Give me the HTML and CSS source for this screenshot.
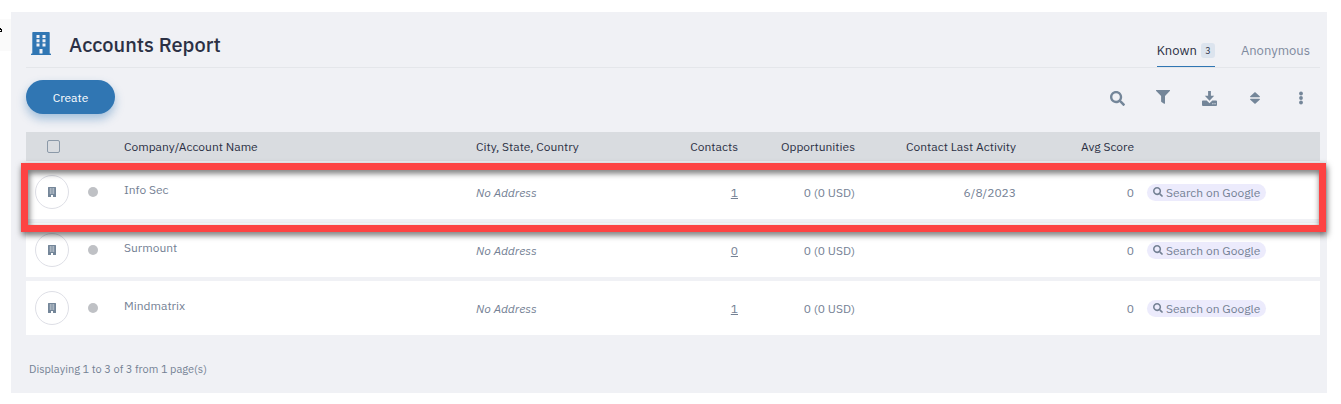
FILE: index.html
```html
<!DOCTYPE html>
<html lang="en">

<head>
    <meta charset="UTF-8">
    <meta name="viewport" content="width=device-width, initial-scale=1.0">
    <title>Accounts Report</title>
    <link rel="stylesheet" href="styles.css">
</head>

<body>
    <!-- shared icons -->
    <svg class="sprite" aria-hidden="true">
        <symbol id="icon-search" viewBox="0 0 512 512">
            <path d="M505 442.700L405.300 343c-4.500-4.500-10.600-7-17-7H372c27.600-35.300 44-79.700 44-128C416 93.100 322.900 0 208 0S0 93.100 0 208s93.100 208 208 208c48.300 0 92.700-16.400 128-44v16.300c0 6.400 2.500 12.500 7 17l99.700 99.700c9.400 9.400 24.600 9.400 33.900 0l28.300-28.300c9.400-9.400 9.400-24.600.1-34zM208 336c-70.700 0-128-57.200-128-128 0-70.700 57.200-128 128-128 70.700 0 128 57.200 128 128 0 70.700-57.200 128-128 128z" />
        </symbol>
        <symbol id="icon-building" viewBox="0 0 8 10">
            <path fill-rule="evenodd" d="M.5 0h7q.5 0 .5.500V10H5V8H3v2H0V.5Q0 0 .5 0zM1.800 1.500v1h1v-1zM3.500 1.500v1h1v-1zM5.200 1.500v1h1v-1zM1.800 3.500v1h1v-1zM3.500 3.500v1h1v-1zM5.200 3.500v1h1v-1zM1.800 5.500v1h1v-1zM3.500 5.500v1h1v-1zM5.200 5.500v1h1v-1z" />
        </symbol>
    </svg>

    <div class="layout">
        <aside class="rail">
            <div class="rail-tab">
                <svg width="3" height="6" viewBox="0 0 3 6"><path d="M0 0h1v1h1v3H0V3h1V2H0z" /></svg>
            </div>
        </aside>

        <main class="panel">
            <header class="panel-header">
                <svg class="title-icon" viewBox="0 0 20 23">
                    <path fill-rule="evenodd" d="M2 0h16q.7 0 .7.700V21.500h.6q.7 0 .7.700V23H0v-.8q0-.7.700-.7h.6V.7Q1.300 0 2 0zM5.500 3v3h3V3zM11.500 3v3h3V3zM5.500 7.200v3h3v-3zM11.500 7.200v3h3v-3zM5.500 11.400v3h3v-3zM11.500 11.400v3h3v-3zM8.500 17v4.500h3V17z" />
                </svg>
                <h1>Accounts Report</h1>
                <nav class="tabs">
                    <a href="#" class="tab active">Known <span class="count">3</span></a>
                    <a href="#" class="tab">Anonymous</a>
                </nav>
            </header>

            <div class="toolbar">
                <button class="btn-create">Create</button>
                <div class="tools">
                    <button class="tool" aria-label="Search"><svg width="15" height="15"><use href="#icon-search" /></svg></button>
                    <button class="tool tool-filter" aria-label="Filter"><svg width="14" height="14" viewBox="0 0 14 14"><path d="M.5 0h13c.5 0 .7.600.3 1L9 6v7.200c0 .5-.5.800-.9.500L5.500 12a.8.800 0 0 1-.4-.6V6L.2 1C-.2.600 0 0 .5 0z" /></svg></button>
                    <button class="tool" aria-label="Download"><svg width="15" height="15" viewBox="0 0 16 16"><path fill-rule="evenodd" d="M6.500 0h3v5H13L8 10.500 3 5h3.500zM1 10h4l3 3 3-3h4c.6 0 1 .4 1 1v4c0 .6-.4 1-1 1H1c-.6 0-1-.4-1-1v-4c0-.6.4-1 1-1zM11 13v1.200h1.200V13zM13.300 13v1.200h1.200V13z" /></svg></button>
                    <button class="tool" aria-label="Sort"><svg width="10" height="14" viewBox="0 0 10 14"><path d="M5 1L.3 5.300c-.5.500-.2 1 .3 1h8.800c.5 0 .8-.5.300-1zM5 13L.3 8.700c-.5-.5-.2-1 .3-1h8.800c.5 0 .8.500.3 1z" /></svg></button>
                    <button class="tool" aria-label="More"><svg width="4" height="14" viewBox="0 0 4 14"><circle cx="2" cy="2.500" r="1.900" /><circle cx="2" cy="7" r="1.900" /><circle cx="2" cy="11.500" r="1.900" /></svg></button>
                </div>
            </div>

            <table class="accounts">
                <thead>
                    <tr>
                        <th class="col-check"><input type="checkbox" aria-label="Select all"></th>
                        <th class="col-status"></th>
                        <th class="col-name">Company/Account Name</th>
                        <th class="col-city">City, State, Country</th>
                        <th class="col-contacts num">Contacts</th>
                        <th class="col-opps num">Opportunities</th>
                        <th class="col-activity num">Contact Last Activity</th>
                        <th class="col-score num">Avg Score</th>
                        <th></th>
                    </tr>
                </thead>
                <tbody>
                    <tr class="highlight">
                        <td><span class="avatar"><svg width="8" height="10"><use href="#icon-building" /></svg></span></td>
                        <td><span class="dot"></span></td>
                        <td class="name">Info Sec</td>
                        <td class="address">No Address</td>
                        <td class="num"><a href="#">1</a></td>
                        <td class="num">0 (0 USD)</td>
                        <td class="num">6/8/2023</td>
                        <td class="num">0</td>
                        <td class="action"><button class="btn-google"><svg width="10" height="10"><use href="#icon-search" /></svg>Search on Google</button></td>
                    </tr>
                    <tr>
                        <td><span class="avatar"><svg width="8" height="10"><use href="#icon-building" /></svg></span></td>
                        <td><span class="dot"></span></td>
                        <td class="name">Surmount</td>
                        <td class="address">No Address</td>
                        <td class="num"><a href="#">0</a></td>
                        <td class="num">0 (0 USD)</td>
                        <td class="num"></td>
                        <td class="num">0</td>
                        <td class="action"><button class="btn-google"><svg width="10" height="10"><use href="#icon-search" /></svg>Search on Google</button></td>
                    </tr>
                    <tr>
                        <td><span class="avatar"><svg width="8" height="10"><use href="#icon-building" /></svg></span></td>
                        <td><span class="dot"></span></td>
                        <td class="name">Mindmatrix</td>
                        <td class="address">No Address</td>
                        <td class="num"><a href="#">1</a></td>
                        <td class="num">0 (0 USD)</td>
                        <td class="num"></td>
                        <td class="num">0</td>
                        <td class="action"><button class="btn-google"><svg width="10" height="10"><use href="#icon-search" /></svg>Search on Google</button></td>
                    </tr>
                </tbody>
            </table>

            <p class="paging">Displaying 1 to 3 of 3 from 1 page(s)</p>
        </main>
    </div>
</body>

</html>
```
FILE: styles.css
```css
* {
    box-sizing: border-box;
}

body {
    margin: 0;
    background-color: #fff;
    font-family: "IBM Plex Sans", "Noto Sans", sans-serif;
    font-size: 12px;
    color: #748194;
}

button {
    font-family: inherit;
    border: none;
    cursor: pointer;
}

svg {
    display: block;
    fill: currentColor;
}

.sprite {
    display: none;
}

.layout {
    display: flex;
    padding: 12px 14px 11px 0;
}

.rail {
    width: 11px;
    padding-top: 7px;
}

.rail-tab {
    height: 32px;
    padding-top: 9px;
    background-color: #fafafa;
    color: #000;
}

.panel {
    flex: 1;
    padding: 0 7px 16px 15px;
    background-color: #f0f1f5;
}

.panel-header {
    display: flex;
    align-items: center;
    height: 56px;
    padding: 0 10px 0 5px;
    border-bottom: 1px solid #e4e6ea;
}

.title-icon {
    width: 20px;
    height: 23px;
    margin-top: 8px;
    color: #3076b3;
}

.panel-header h1 {
    margin: 10px 0 0 18px;
    font-size: 20px;
    font-weight: 500;
    line-height: 28px;
    color: #2b3044;
}

.tabs {
    display: flex;
    gap: 26px;
    align-self: flex-end;
    margin-left: auto;
}

.tab {
    height: 29px;
    font-size: 13px;
    line-height: 26px;
    color: #7f8a9e;
    text-decoration: none;
}

.tab.active {
    color: #2b3044;
    border-bottom: 1px solid #3076b3;
}

.count {
    display: inline-block;
    width: 14px;
    margin-left: 1px;
    border-radius: 3px;
    background-color: #dce4ee;
    font-size: 9px;
    line-height: 15px;
    text-align: center;
    vertical-align: 1px;
}

.toolbar {
    display: flex;
    justify-content: space-between;
    align-items: center;
    padding: 12px 11px 14px 0;
}

.btn-create {
    width: 89px;
    height: 34px;
    border-radius: 17px;
    background-color: #3076b3;
    box-shadow: 0 5px 10px rgba(48, 118, 179, 0.4);
    color: #fff;
    font-size: 12px;
}

.tools {
    display: flex;
    gap: 30px;
    margin-top: 2px;
}

.tool {
    display: flex;
    justify-content: center;
    align-items: center;
    width: 16px;
    height: 16px;
    padding: 0;
    background: none;
    color: #748699;
}

.tool-filter {
    align-items: flex-start;
}

.accounts {
    width: 100%;
    table-layout: fixed;
    border-spacing: 0 4px;
    margin: 0;
}

.accounts th,
.accounts td {
    padding: 0;
    text-align: left;
}

.accounts th {
    height: 29px;
    background-color: #d9dce0;
    color: #2b3044;
    font-weight: 400;
}

.accounts td {
    height: 54px;
    background-color: #fff;
}

.accounts .num {
    text-align: right;
}

.col-check {
    width: 62px;
}

.col-status {
    width: 36px;
}

.col-name {
    width: 352px;
}

.col-city {
    width: 152px;
}

.col-contacts {
    width: 110px;
}

.col-opps {
    width: 117px;
}

.col-activity {
    width: 161px;
}

.col-score {
    width: 118px;
}

.col-check input {
    display: block;
    appearance: none;
    width: 13px;
    height: 13px;
    margin: 0 0 0 21px;
    border: 1px solid #8b99a8;
    border-radius: 2px;
}

.avatar {
    display: flex;
    justify-content: center;
    align-items: center;
    width: 34px;
    height: 34px;
    margin-left: 9px;
    border: 1px solid #dedfe6;
    border-radius: 50%;
    color: #748699;
}

.dot {
    display: block;
    width: 10px;
    height: 10px;
    border-radius: 50%;
    background-color: #bfc1c5;
}

.accounts .name {
    padding-bottom: 6px;
}

.address {
    font-style: italic;
}

.accounts a {
    color: inherit;
}

.accounts .action {
    padding-left: 13px;
}

.btn-google {
    display: flex;
    align-items: center;
    gap: 3px;
    height: 17px;
    padding: 0 6px;
    border-radius: 9px;
    background-color: #ecebfc;
    color: #748194;
    font-size: 12px;
    white-space: nowrap;
}

/* red frame around the selected account */
.highlight {
    position: relative;
}

.highlight td:last-child::after {
    content: "";
    position: absolute;
    top: -2px;
    right: -6px;
    bottom: -13px;
    left: -5px;
    border: 7px solid #fd4343;
    filter: drop-shadow(1px 3px 3px rgba(0, 0, 0, 0.6));
    pointer-events: none;
}

.paging {
    margin: 22px 0 0 3px;
    font-size: 11px;
    line-height: 16px;
}
```
